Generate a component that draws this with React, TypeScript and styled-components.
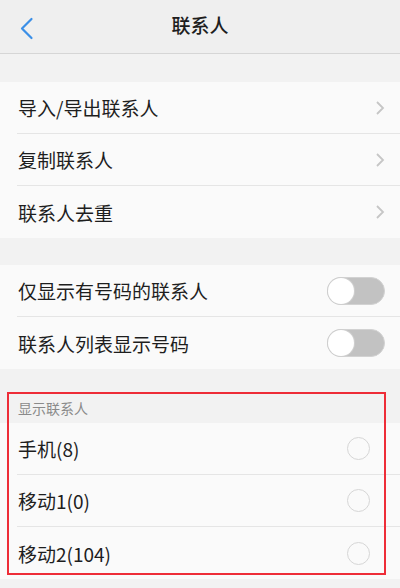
import styled, { createGlobalStyle } from "styled-components";

const GlobalStyle = createGlobalStyle`
  html, body {
    margin: 0;
    padding: 0;
    background: #f2f2f2;
    font-family: "Noto Sans CJK SC", "Noto Sans", sans-serif;
  }
  * {
    box-sizing: border-box;
  }
`;

type Row = { label: string };

const actionRows: Row[] = [
  { label: "导入/导出联系人" },
  { label: "复制联系人" },
  { label: "联系人去重" },
];

const toggleRows: Row[] = [
  { label: "仅显示有号码的联系人" },
  { label: "联系人列表显示号码" },
];

const accountRows: Row[] = [
  { label: "手机(8)" },
  { label: "移动1(0)" },
  { label: "移动2(104)" },
];

const App = () => {
  return (
    <Page>
      <GlobalStyle />
      <Header>
        <BackButton>
          <svg width="14" height="24" viewBox="0 0 14 24">
            <polyline
              points="11.5,2 2,11.5 11.5,21"
              fill="none"
              stroke="#3b8fe7"
              strokeWidth="2.2"
              strokeLinecap="round"
              strokeLinejoin="round"
            />
          </svg>
        </BackButton>
        <Title>联系人</Title>
      </Header>

      <Gap $height={28} />
      <Section>
        {actionRows.map((row, i) => (
          <ListRow key={row.label} $last={i === actionRows.length - 1}>
            <Label>{row.label}</Label>
            <svg width="10" height="16" viewBox="0 0 10 16">
              <polyline
                points="2,2 8,8 2,14"
                fill="none"
                stroke="#c6c6c6"
                strokeWidth="1.8"
              />
            </svg>
          </ListRow>
        ))}
      </Section>

      <Gap $height={27} />
      <Section>
        {toggleRows.map((row, i) => (
          <ListRow key={row.label} $last={i === toggleRows.length - 1}>
            <Label>{row.label}</Label>
            <Switch>
              <Knob />
            </Switch>
          </ListRow>
        ))}
      </Section>

      <Marked>
        <SectionTitle>显示联系人</SectionTitle>
        <Section>
          {accountRows.map((row, i) => (
            <ListRow key={row.label} $last={i === accountRows.length - 1}>
              <Label>{row.label}</Label>
              <Radio />
            </ListRow>
          ))}
        </Section>
        <RedFrame />
      </Marked>
    </Page>
  );
};

export default App;

const Page = styled.div`
  width: 400px;
  min-height: 588px;
  background: #f2f2f2;
`;

const Header = styled.div`
  position: relative;
  height: 54px;
  display: flex;
  align-items: center;
  justify-content: center;
  background: #efefef;
  border-bottom: 1px solid #d6d6d6;
  padding-bottom: 4px;
`;

const BackButton = styled.div`
  position: absolute;
  left: 20px;
  top: 17px;
  display: flex;
`;

const Title = styled.div`
  font-size: 19px;
  font-weight: 500;
  color: #1e1e1e;
`;

const Gap = styled.div<{ $height: number }>`
  height: ${(p) => p.$height}px;
`;

const Section = styled.div`
  background: #fafafa;
  padding-left: 17px;
`;

const ListRow = styled.div<{ $last?: boolean }>`
  height: 52px;
  display: flex;
  align-items: center;
  justify-content: space-between;
  padding-right: 15px;
  border-bottom: ${(p) => (p.$last ? "none" : "1px solid #e5e5e5")};
`;

const Label = styled.div`
  font-size: 19px;
  color: #1e1e1e;
  padding-left: 1px;
`;

const Switch = styled.div`
  width: 58px;
  height: 28px;
  border-radius: 14px;
  background: #c2c2c2;
  border: 1px solid #d2d2d2;
  display: flex;
  align-items: center;
`;

const Knob = styled.div`
  width: 26px;
  height: 26px;
  border-radius: 50%;
  background: #fff;
  box-shadow: 0 0 0 1px #cfcfcf;
`;

const Radio = styled.div`
  width: 23px;
  height: 23px;
  border-radius: 50%;
  border: 1.5px solid #d6d6d6;
  margin-right: 15px;
`;

const Marked = styled.div`
  position: relative;
  padding-bottom: 10px;
`;

const SectionTitle = styled.div`
  height: 54px;
  padding: 29px 0 0 18px;
  font-size: 14px;
  line-height: 20px;
  color: #8a8a8a;
`;

const RedFrame = styled.div`
  position: absolute;
  left: 7px;
  top: 23px;
  width: 379px;
  height: 183px;
  border: 2px solid #ee2d38;
  pointer-events: none;
`;
